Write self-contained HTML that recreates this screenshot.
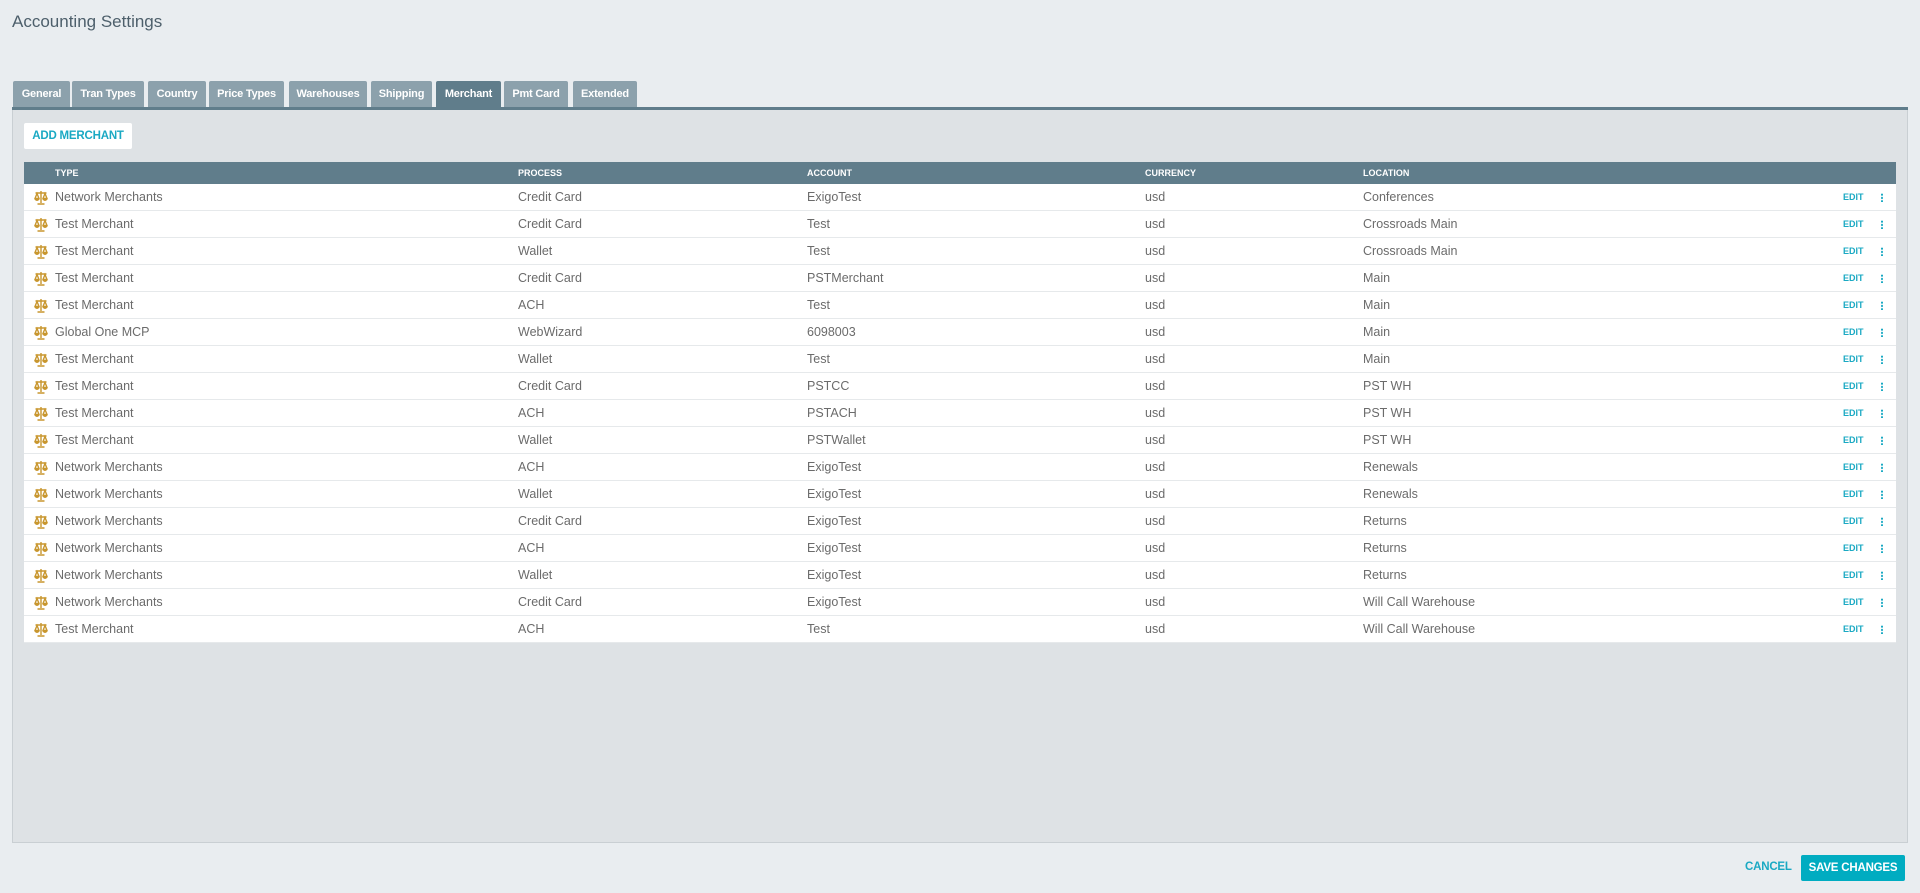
<!DOCTYPE html>
<html><head><meta charset="utf-8"><style>
*{box-sizing:border-box;margin:0;padding:0}
body{width:1920px;height:893px;background:#e9edf0;font-family:"Liberation Sans",sans-serif;position:relative;overflow:hidden}
.title{position:absolute;left:12px;top:12px;font-size:17px;color:#4d5f6b}
.tab{position:absolute;top:81px;height:27px;background:#8ca1ac;color:#fff;font-weight:bold;font-size:11px;line-height:27px;text-align:center;border-radius:2px 2px 0 0;white-space:nowrap;letter-spacing:-0.2px}
.tab.act{background:#607d8b}
.bar{position:absolute;left:12px;top:107px;width:1896px;height:3px;background:#607d8b}
.panel{position:absolute;left:12px;top:110px;width:1896px;height:733px;background:#dee2e5;border:1px solid #c9cfd3;border-top:none}
.add{position:absolute;left:24px;top:123px;width:108px;height:26px;background:#fff;border-radius:2px;color:#1aa9c3;font-weight:bold;font-size:11.5px;line-height:26px;text-align:center;letter-spacing:-0.2px}
.thead{position:absolute;left:24px;top:162px;width:1872px;height:22px;background:#607d8b}
.th{position:absolute;top:0;line-height:22px;color:#fff;font-weight:bold;font-size:9px}
.row{position:absolute;left:24px;width:1872px;height:27px;background:#fff;border-bottom:1px solid #e6e9eb}
.c{position:absolute;top:0;line-height:26px;font-size:12.5px;color:#6b6b6b}
.ic{position:absolute;left:10px;top:6px}
.edit{position:absolute;left:1819px;top:0;line-height:27px;font-size:9px;font-weight:bold;color:#1aa9c3}
.dots{position:absolute;left:1857px;top:9px;width:2px;height:9px;background:radial-gradient(circle,#1aa9c3 1px,transparent 1.2px) 0 0/2px 3.3px repeat-y}
.cancel{position:absolute;left:1745px;top:861px;font-weight:bold;font-size:11.5px;color:#1aa9c3;letter-spacing:-0.2px}
.save{position:absolute;left:1801px;top:855px;width:104px;height:26px;background:#00acc1;border-radius:2px;color:#fff;font-weight:bold;font-size:11.5px;line-height:26px;text-align:center;letter-spacing:-0.2px}
</style></head><body>
<div class="title">Accounting Settings</div>
<div class="tab" style="left:13px;width:57px">General</div>
<div class="tab" style="left:72px;width:72px">Tran Types</div>
<div class="tab" style="left:148px;width:58px">Country</div>
<div class="tab" style="left:209px;width:75px">Price Types</div>
<div class="tab" style="left:289px;width:78px">Warehouses</div>
<div class="tab" style="left:371px;width:61px">Shipping</div>
<div class="tab act" style="left:436px;width:65px">Merchant</div>
<div class="tab" style="left:504px;width:64px">Pmt Card</div>
<div class="tab" style="left:573px;width:64px">Extended</div>
<div class="panel"></div>
<div class="bar"></div>
<div class="add">ADD MERCHANT</div>
<div class="thead">
<div class="th" style="left:31px">TYPE</div>
<div class="th" style="left:494px">PROCESS</div>
<div class="th" style="left:783px">ACCOUNT</div>
<div class="th" style="left:1121px">CURRENCY</div>
<div class="th" style="left:1339px">LOCATION</div>
</div>
<div id="rows"></div>
<script>
var d=[["Network Merchants","Credit Card","ExigoTest","Conferences"],["Test Merchant","Credit Card","Test","Crossroads Main"],["Test Merchant","Wallet","Test","Crossroads Main"],["Test Merchant","Credit Card","PSTMerchant","Main"],["Test Merchant","ACH","Test","Main"],["Global One MCP","WebWizard","6098003","Main"],["Test Merchant","Wallet","Test","Main"],["Test Merchant","Credit Card","PSTCC","PST WH"],["Test Merchant","ACH","PSTACH","PST WH"],["Test Merchant","Wallet","PSTWallet","PST WH"],["Network Merchants","ACH","ExigoTest","Renewals"],["Network Merchants","Wallet","ExigoTest","Renewals"],["Network Merchants","Credit Card","ExigoTest","Returns"],["Network Merchants","ACH","ExigoTest","Returns"],["Network Merchants","Wallet","ExigoTest","Returns"],["Network Merchants","Credit Card","ExigoTest","Will Call Warehouse"],["Test Merchant","ACH","Test","Will Call Warehouse"]];
var ic='<svg class="ic" width="14" height="15" viewBox="0 0 14 15"><g fill="none" stroke="#c8962e" stroke-width="1.4"><path d="M7 1v12M1.5 3h11M3.5 14h7"/><path d="M3 3.5L1 8.5h4zM11 3.5L9 8.5h4z"/></g><path d="M0.5 8.5h5a2.5 2.5 0 0 1-5 0zM8.5 8.5h5a2.5 2.5 0 0 1-5 0z" fill="#c8962e"/></svg>';
var h='';
d.forEach(function(r,i){h+='<div class="row" style="top:'+(184+i*27)+'px">'+ic+'<div class="c" style="left:31px">'+r[0]+'</div><div class="c" style="left:494px">'+r[1]+'</div><div class="c" style="left:783px">'+r[2]+'</div><div class="c" style="left:1121px">usd</div><div class="c" style="left:1339px">'+r[3]+'</div><div class="edit">EDIT</div><div class="dots"></div></div>';});
document.getElementById('rows').innerHTML=h;
</script>
<div class="cancel">CANCEL</div>
<div class="save">SAVE CHANGES</div>
</body></html>
